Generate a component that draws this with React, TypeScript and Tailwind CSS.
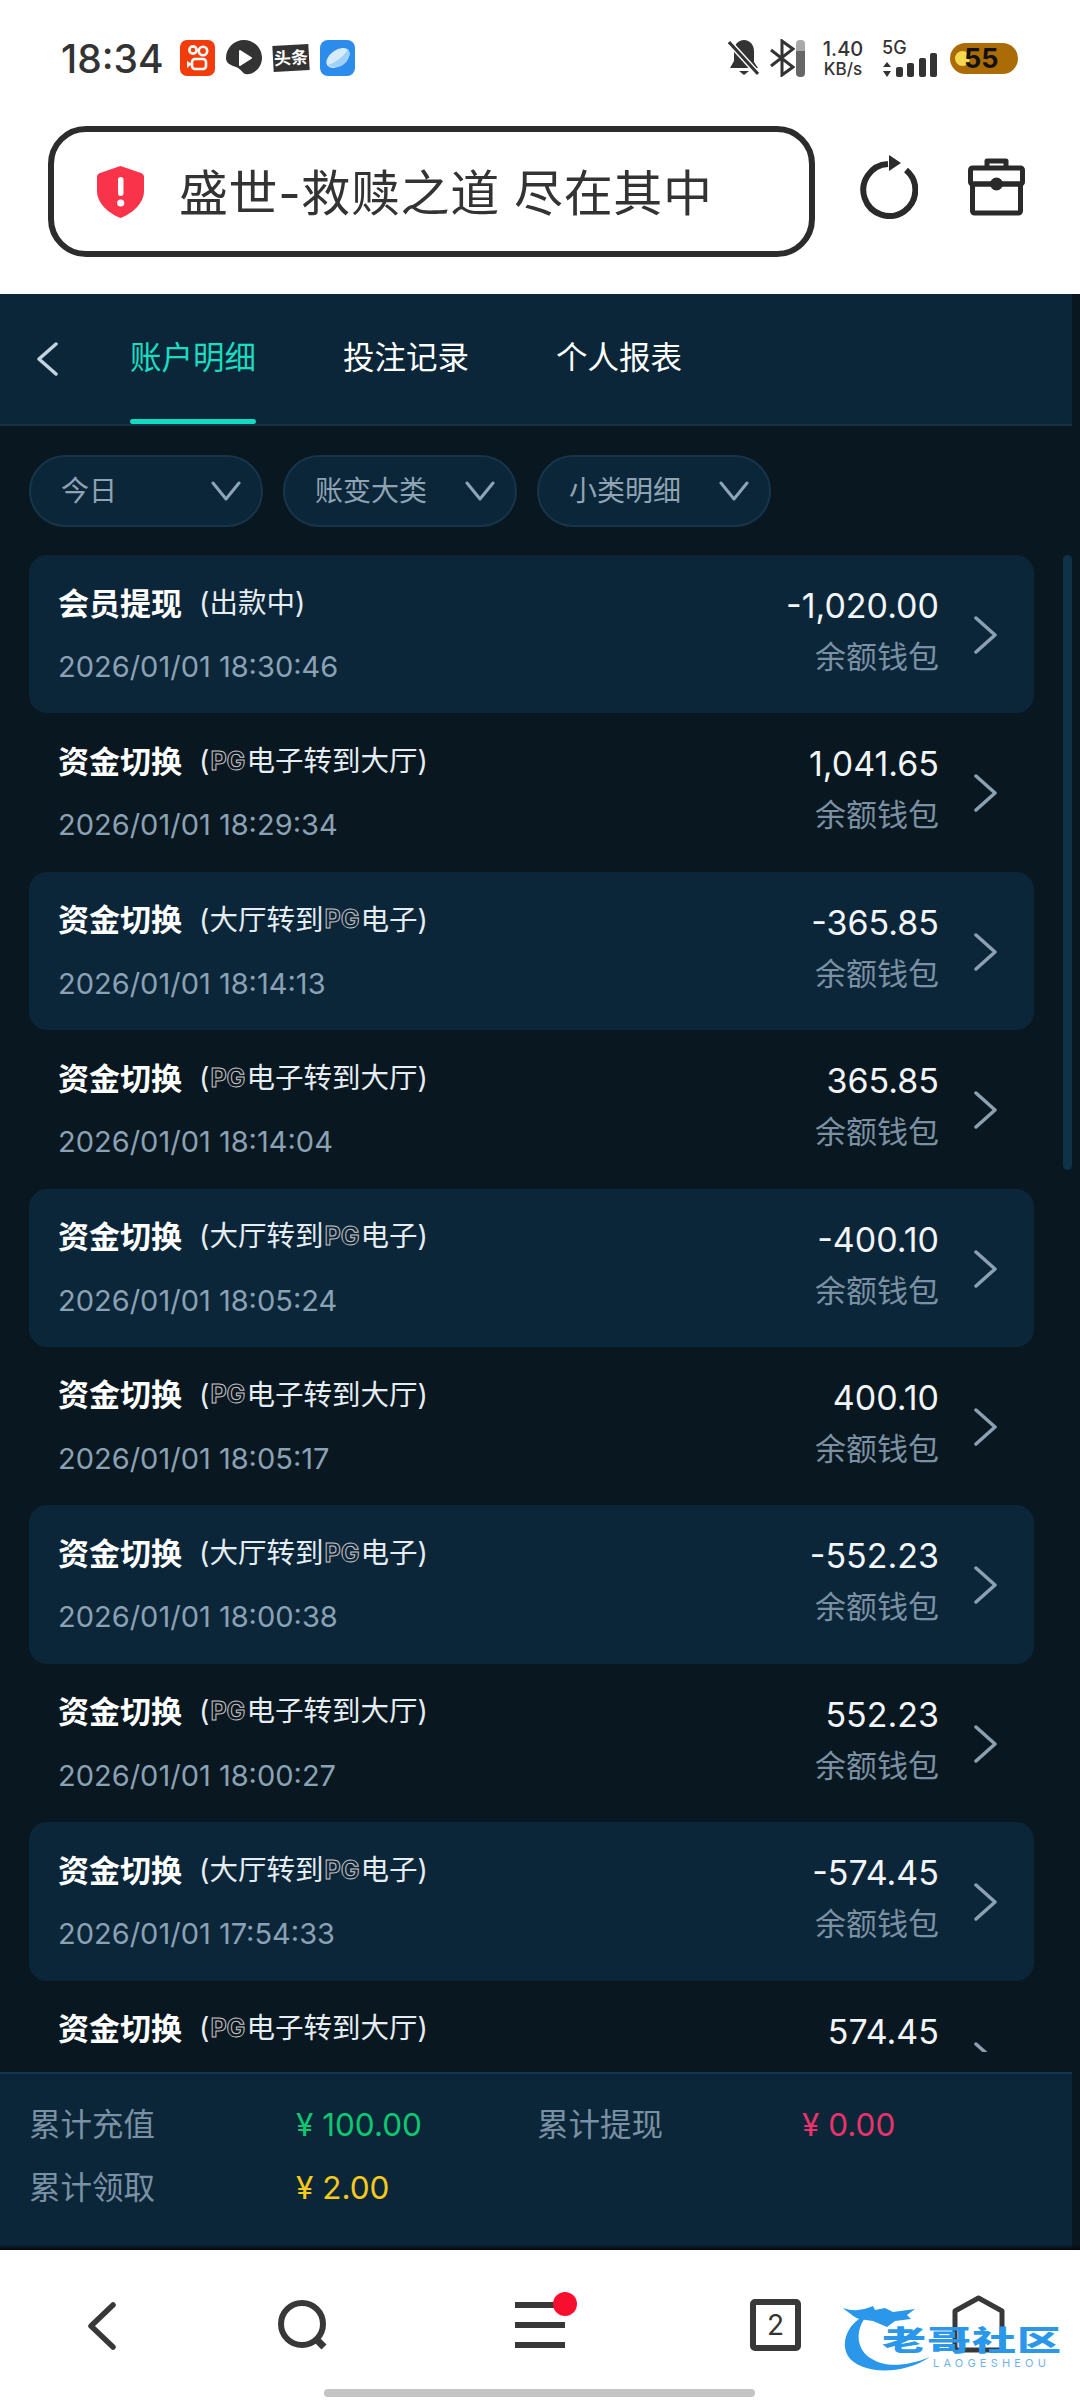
const font = { fontFamily: 'Inter, "Noto Sans CJK SC", sans-serif' }

type RowData = { title: string; note: string; time?: string; amount: string }

const rows: RowData[] = [
  { title: '会员提现', note: '出款中', time: '2026/01/01 18:30:46', amount: '-1,020.00' },
  { title: '资金切换', note: 'out', time: '2026/01/01 18:29:34', amount: '1,041.65' },
  { title: '资金切换', note: 'in', time: '2026/01/01 18:14:13', amount: '-365.85' },
  { title: '资金切换', note: 'out', time: '2026/01/01 18:14:04', amount: '365.85' },
  { title: '资金切换', note: 'in', time: '2026/01/01 18:05:24', amount: '-400.10' },
  { title: '资金切换', note: 'out', time: '2026/01/01 18:05:17', amount: '400.10' },
  { title: '资金切换', note: 'in', time: '2026/01/01 18:00:38', amount: '-552.23' },
  { title: '资金切换', note: 'out', time: '2026/01/01 18:00:27', amount: '552.23' },
  { title: '资金切换', note: 'in', time: '2026/01/01 17:54:33', amount: '-574.45' },
  // last row is cut by the list edge, date and wallet label never show
  { title: '资金切换', note: 'out', amount: '574.45' },
]

function PgMark() {
  return (
    <span className="mx-[1px] w-[35px] text-center text-[25px] leading-none font-bold text-transparent [-webkit-text-stroke:1px_#c9c3c3]">
      PG
    </span>
  )
}

function Note({ note }: { note: string }) {
  return (
    <span className="ml-[17px] flex items-center text-[28.500px] leading-none text-[#e6edf2]">
      (
      {note === 'out' && <PgMark />}
      {note === 'out' && '电子转到大厅'}
      {note === 'in' && '大厅转到'}
      {note === 'in' && <PgMark />}
      {note === 'in' && '电子'}
      {note !== 'out' && note !== 'in' && note}
      )
    </span>
  )
}

function Chip({ label }: { label: string }) {
  return (
    <div className="flex h-[72px] w-[234px] items-center justify-between rounded-[36px] border-2 border-[#17354a] bg-[#0c2639] pr-[20px] pl-[30px]">
      <span className="text-[28px] text-[#8ea3b3]">{label}</span>
      <svg width="30" height="20" viewBox="0 0 30 20" fill="none" stroke="#8fa5b5" strokeWidth="3" strokeLinecap="round" strokeLinejoin="round">
        <path d="M2 2l13 16L28 2" />
      </svg>
    </div>
  )
}

function StatusBar() {
  return (
    <div className="flex h-[96px] items-center justify-between pt-[20px] pr-[62px] pl-[61px] text-[#333]">
      <div className="flex items-center">
        <span className="text-[39px] leading-none font-medium">18:34</span>
        <div className="ml-[16px] flex items-center gap-[11px]">
          {/* app notification icons */}
          <svg width="35" height="36" viewBox="0 0 35 36">
            <rect width="35" height="36" rx="7" fill="#f23c0c" />
            <g fill="none" stroke="#fff" strokeWidth="2.6">
              <circle cx="13" cy="10" r="3.6" />
              <circle cx="23" cy="11" r="4.2" />
              <rect x="12" y="19" width="14" height="10" rx="3" />
            </g>
            <path d="M12 24l-5-3v7z" fill="#fff" />
          </svg>
          <svg width="36" height="36" viewBox="0 0 36 36">
            <path d="M18 0c10 0 18 8 18 18 0 9-7 15-13 16-6 2-7-5-13-7C4 25 0 23 0 18 0 8 8 0 18 0z" fill="#333" />
            <path d="M14 11l11 7-11 7z" fill="#fff" stroke="#fff" strokeWidth="2" strokeLinejoin="round" />
          </svg>
          <span className="flex h-[26px] w-[36px] -rotate-3 items-center justify-center bg-[#333] text-[17px] leading-none font-bold whitespace-nowrap text-white">
            头条
          </span>
          <svg width="35" height="36" viewBox="0 0 35 36">
            <rect width="35" height="36" rx="8" fill="#2b8cec" />
            <ellipse cx="18" cy="18" rx="13" ry="8" transform="rotate(-35 18 18)" fill="#d6ecfd" />
            <path d="M8 25C13 24 24 17 28 9c3 4 1 12-5 16-5 3-11 3-15 0z" fill="#9fd0f7" />
          </svg>
        </div>
      </div>
      <div className="flex items-center">
        {/* bell muted */}
        <svg width="31" height="38" viewBox="0 0 31 38">
          <path d="M16 1c6 0 10 5 10 11v11l4 6H2l4-7V12c0-6 4-11 10-11zM11 32h10l-5 4z" fill="#333" />
          <path d="M1 3l29 32" stroke="#fff" strokeWidth="6" />
          <path d="M1 3l29 32" stroke="#333" strokeWidth="3" />
        </svg>
        <svg className="ml-[10px]" width="26" height="38" viewBox="0 0 26 38" fill="none" stroke="#333" strokeWidth="3">
          <path d="M2 11l22 17-11 8V2l11 8L2 27" />
        </svg>
        <div className="ml-[1px] h-[37px] w-[9px] rounded-[4px] bg-[linear-gradient(#a8a8a8_30%,#666_30%)]" />
        <div className="ml-[16px] flex w-[44px] flex-col items-center leading-none font-medium">
          <span className="text-[20px]">1.40</span>
          <span className="mt-[2px] text-[17px] whitespace-nowrap">KB/s</span>
        </div>
        <div className="ml-[17px] flex w-[55px] flex-col">
          <span className="text-[18px] leading-none font-medium">5G</span>
          <svg className="-mt-[4px]" width="55" height="24" viewBox="0 0 55 24" fill="#333">
            <path d="M5 9l4 5H1zM5 24l-4-6h8z" />
            <rect x="14" y="14" width="7" height="10" rx="2" />
            <rect x="25" y="10" width="7" height="14" rx="2" />
            <rect x="37" y="5" width="7" height="19" rx="2" />
            <rect x="48" y="0" width="7" height="24" rx="2" />
          </svg>
        </div>
        <div className="relative ml-[13px] flex h-[31px] w-[68px] items-center rounded-[16px] bg-[#ab6c07] pl-[14px] text-[27px] leading-none font-bold text-[#111]">
          <div className="absolute top-[8px] left-[5px] h-[15px] w-[15px] rounded-full bg-[#f4d94e]" />
          <span className="relative">55</span>
        </div>
      </div>
    </div>
  )
}

function AddressRow() {
  return (
    <div className="flex h-[198px] items-start pt-[30px] pl-[48px]">
      <div className="flex h-[131px] w-[767px] items-center rounded-[38px] border-[6px] border-[#2c2c2c] pl-[43px]">
        <svg width="47" height="52" viewBox="0 0 47 52">
          <path d="M23.5 0L44 7c2 1 3 2 3 4v14c0 12-11 22-23.500 27C11 47 0 37 0 25V11c0-2 1-3 3-4z" fill="#f8334a" />
          <rect x="21" y="11" width="5.500" height="19" rx="2.700" fill="#fff" />
          <circle cx="23.700" cy="37" r="3.600" fill="#fff" />
        </svg>
        <span className="mt-[4px] ml-[35px] text-[49px] leading-none tracking-[0.6px] whitespace-nowrap text-[#333]">盛世-救赎之道 尽在其中</span>
      </div>
      <div className="mt-[29px] ml-[45px] flex items-center gap-[50px]">
        <svg width="58" height="64" viewBox="0 0 58 64" fill="none" stroke="#2a2a2a" strokeWidth="6">
          <path d="M46 15a26 26 0 1 1-18-6" />
          <path d="M29 0l12 8-12 8z" fill="#2a2a2a" stroke="none" />
        </svg>
        <svg width="57" height="58" viewBox="0 0 57 58" fill="none" stroke="#2a2a2a" strokeWidth="5" strokeLinejoin="round">
          <path d="M19 10V3h19v7" />
          <rect x="2.500" y="10" width="52" height="16" rx="2" />
          <rect x="4.500" y="26" width="48" height="29" rx="2" />
          <circle cx="28.500" cy="26" r="4" fill="#2a2a2a" />
        </svg>
      </div>
    </div>
  )
}

function Tabs() {
  return (
    <div className="flex h-[132px] w-[1072px] items-stretch border-b-2 border-[#153247] bg-[#0c2639]">
      <svg className="mt-[48px] ml-[36px]" width="22" height="34" viewBox="0 0 22 34" fill="none" stroke="#c3d3df" strokeWidth="3.500" strokeLinecap="round" strokeLinejoin="round">
        <path d="M20 2L3 17l17 15" />
      </svg>
      <div className="ml-[72px] flex gap-[87px] text-[31.500px] text-white">
        <div className="relative flex h-[130px] items-start pt-[40px] text-[#19dcc0]">
          账户明细
          <div className="absolute right-0 bottom-0 left-0 h-[5px] rounded-[3px] bg-[#12dcc0]" />
        </div>
        <div className="pt-[40px]">投注记录</div>
        <div className="pt-[40px]">个人报表</div>
      </div>
    </div>
  )
}

function Row({ row, index }: { row: RowData; index: number }) {
  return (
    <div className={`flex h-[158.400px] w-[1005px] shrink-0 items-start justify-between rounded-[18px] pl-[29px] ${index % 2 === 0 ? 'bg-[#0c2639]' : ''}`}>
      <div className="flex flex-col pt-[30px]">
        <div className="flex h-[36px] items-center whitespace-nowrap">
          <span className="text-[31px] leading-none font-bold text-white">{row.title}</span>
          <Note note={row.note} />
        </div>
        {row.time && <span className="mt-[31px] text-[29px] leading-none text-[#8ba1b4]">{row.time}</span>}
      </div>
      <div className="flex items-start pr-[37px]">
        <div className="flex flex-col items-end pt-[34px]">
          <span className="text-[34px] leading-none text-[#f2f5f7]">{row.amount}</span>
          {row.time && <span className="mt-[18px] text-[31px] leading-none text-[#7b91a3]">余额钱包</span>}
        </div>
        <svg className="mt-[61px] ml-[34px]" width="24" height="38" viewBox="0 0 24 38" fill="none" stroke="#8ba0b0" strokeWidth="3.500" strokeLinecap="round" strokeLinejoin="round">
          <path d="M3 2l19 17L3 36" />
        </svg>
      </div>
    </div>
  )
}

function Summary() {
  return (
    <div className="grid h-[178px] w-[1072px] grid-cols-[267px_241px_265px_1fr] content-start gap-y-[31px] border-t-2 border-[#14354a] bg-[#0c2639] pt-[35px] pl-[29px] text-[31.500px] leading-[32px]">
      <span className="text-[#7a91a3]">累计充值</span>
      <span className="text-[#0dc871]">¥ 100.00</span>
      <span className="text-[#7a91a3]">累计提现</span>
      <span className="text-[#e8336c]">¥ 0.00</span>
      <span className="text-[#7a91a3]">累计领取</span>
      <span className="text-[#f6c91d]">¥ 2.00</span>
    </div>
  )
}

function BottomNav() {
  return (
    <div className="relative h-[150px] bg-white">
      <svg className="absolute top-[52px] left-[87px]" width="30" height="48" viewBox="0 0 30 48" fill="none" stroke="#383838" strokeWidth="5.500" strokeLinecap="round" strokeLinejoin="round">
        <path d="M26 3L4 24l22 21" />
      </svg>
      <svg className="absolute top-[50px] left-[278px]" width="50" height="51" viewBox="0 0 50 51" fill="none" stroke="#383838" strokeWidth="6">
        <circle cx="24" cy="24" r="21" />
        <path d="M37 38l9 9" strokeWidth="7" />
      </svg>
      <div className="absolute top-[52px] left-[515px] flex w-[50px] flex-col gap-[14px]">
        <div className="h-[6px] bg-[#383838]" />
        <div className="h-[6px] bg-[#383838]" />
        <div className="h-[6px] bg-[#383838]" />
      </div>
      <div className="absolute top-[42px] left-[553px] h-[24px] w-[24px] rounded-full bg-[#f80f2d]" />
      <div className="absolute top-[49px] left-[750px] flex h-[52px] w-[51px] items-center justify-center rounded-[5px] border-[6px] border-[#383838] text-[28px] leading-none text-[#333]">
        2
      </div>
      <svg className="absolute top-[45px] left-[952px]" width="53" height="58" viewBox="0 0 53 58" fill="none" stroke="#383838" strokeWidth="5" strokeLinejoin="round">
        <path d="M3 16L26.500 3 50 16v39H3z" />
      </svg>
      {/* watermark logo */}
      <svg className="absolute top-[50px] left-[840px]" width="100" height="80" viewBox="0 0 100 80" fill="#2a97ea">
        <path d="M28 14C8 22 0 42 8 56c10 16 50 22 82 1-24 10-46 10-58 2C16 50 14 30 28 14z" />
        <path d="M3 8c12 4 20 2 30-2l2 4 10-2 8 4 22-3-8 6 4 4-16 2-8 6-14-6-14-2C16 18 10 14 3 8z" />
      </svg>
      <div className="absolute top-[75px] left-[882px] scale-y-[0.65] text-[44px] leading-[32px] font-black tracking-[1px] whitespace-nowrap text-[#2a97ea]">
        老哥社区
      </div>
      <div className="absolute top-[108px] left-[933px] text-[11px] leading-none tracking-[4.200px] text-[#6fb3ea]">LAOGESHEOU</div>
      <div className="absolute top-[139px] left-[324px] h-[8px] w-[431px] rounded-[4px] bg-[#c4c4c4]" />
    </div>
  )
}

export default function App() {
  return (
    <div className="flex h-[2400px] w-[1080px] flex-col overflow-hidden bg-white" style={font}>
      <StatusBar />
      <AddressRow />
      <div className="relative flex flex-1 flex-col overflow-hidden bg-[#091720]">
        <Tabs />
        <div className="flex gap-[20px] pt-[29px] pl-[29px]">
          <Chip label="今日" />
          <Chip label="账变大类" />
          <Chip label="小类明细" />
        </div>
        <div className="mt-[28px] mb-[20px] flex flex-1 flex-col overflow-hidden pl-[29px]">
          {rows.map((row, i) => (
            <Row key={i} row={row} index={i} />
          ))}
        </div>
        <div className="absolute top-[261px] left-[1063px] h-[615px] w-[9px] rounded-[5px] bg-[#0f3247]" />
        <Summary />
        <div className="absolute right-0 bottom-0 left-0 h-[6px] bg-[linear-gradient(transparent,#05080c)]" />
      </div>
      <BottomNav />
    </div>
  )
}
